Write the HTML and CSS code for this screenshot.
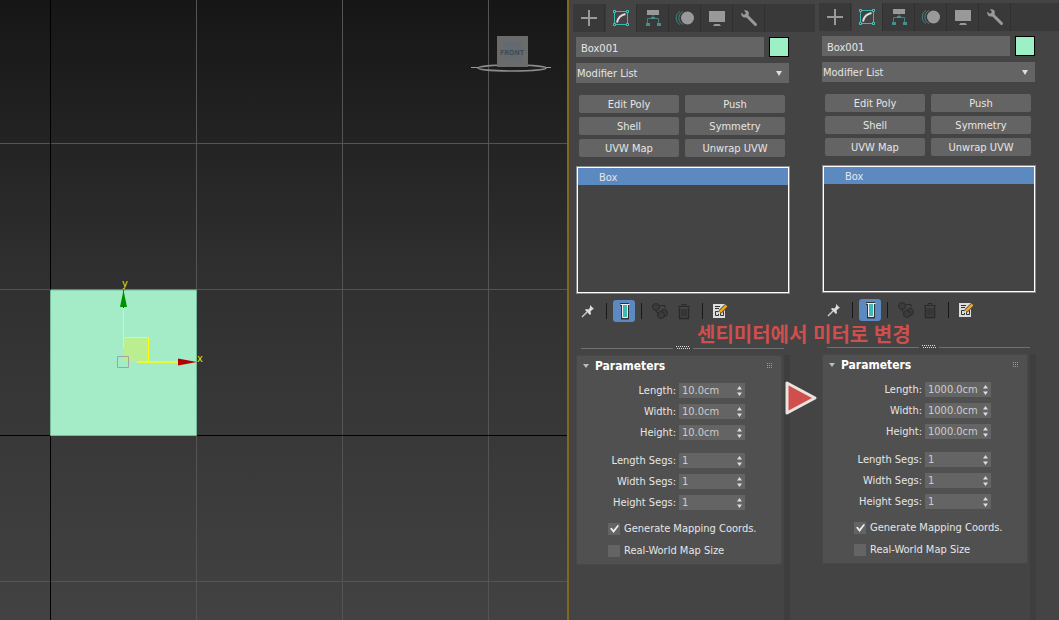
FILE: index.html
```
<!DOCTYPE html>
<html lang="ko">
<head>
  <meta charset="UTF-8">
  <meta name="viewport" content="width=device-width, initial-scale=1.0">
  <title>Box001</title>
  <link rel="stylesheet" href="styles.css">
</head>
<body>
  <!-- shared icons -->
  <svg class="defs" width="0" height="0">
    <symbol id="i-create" viewBox="0 0 20 20"><path d="M10 2v16M2 10h16" stroke="#999" stroke-width="2"/></symbol>
    <symbol id="i-modify" viewBox="0 0 20 20">
      <path d="M5 3.500h10M5 16.500h10M3.500 5v10M16.500 5v10" stroke="#3fb5b0"/>
      <path d="M2.500 2.500h2v2h-2zM15.500 2.500h2v2h-2zM2.500 15.500h2v2h-2zM15.500 15.500h2v2h-2z" fill="#333" stroke="#45c8c3"/>
      <path d="M6 14.500C7 9.500 9.500 7 14.500 6" fill="none" stroke="#ddd" stroke-width="2"/>
    </symbol>
    <symbol id="i-hierarchy" viewBox="0 0 20 20">
      <path d="M4 2h12v5H4z" fill="#999"/>
      <path d="M10 7v3M4.500 16v-5.500h11V16" fill="none" stroke="#43827f"/>
      <path d="M3 15h4v3H3zM14 15h4v3h-4zM8 9h4v2H8z" fill="#43918d"/>
    </symbol>
    <symbol id="i-motion" viewBox="0 0 20 20">
      <circle cx="12.500" cy="10" r="6.500" fill="#999"/>
      <path d="M5 3.500C0 6 0 14 5 16.500M8 3.500C2.500 6 2.500 14 8 16.500" fill="none" stroke="#43827f"/>
    </symbol>
    <symbol id="i-display" viewBox="0 0 20 20"><path d="M2 3h16v11H2zM6 18l1.500-2h5l1.500 2z" fill="#999"/></symbol>
    <symbol id="i-utils" viewBox="0 0 20 20">
      <path d="M8 8l8.500 8.500" stroke="#999" stroke-width="3" stroke-linecap="round"/>
      <path d="M5 2.500C9.500 1.500 10.500 5 9.500 7.500L7.500 9.500C4 10 1.500 8 2.500 4.500L5 7l2-2z" fill="#999"/>
    </symbol>
    <symbol id="i-pin" viewBox="0 0 16 16">
      <path d="M2 14l5-5" stroke="#ccc" stroke-width="1.500"/>
      <path d="M10 2l4 4-1.500.500-2 2 .500 2.500-1 1L5 7l1-1 2.500.500 1.500-2z" fill="#ddd"/>
    </symbol>
    <symbol id="i-tube" viewBox="0 0 18 18">
      <path d="M5 2.500h9M7.500 3v13h5V3" fill="none" stroke="#333" stroke-width="3"/>
      <path d="M5.500 2.500h9M7.500 3v12.500h5V3" fill="#3cbab6" stroke="#eee"/>
    </symbol>
    <symbol id="i-unique" viewBox="0 0 18 18">
      <circle cx="5" cy="5" r="3.500" fill="#3b3b3b" stroke="#2a2a2a"/>
      <path d="M9 3.500h5v3M5 9l2 3" fill="none" stroke="#2a2a2a"/>
      <circle cx="13" cy="11" r="3.500" fill="#3b3b3b" stroke="#2a2a2a"/>
      <circle cx="10" cy="13" r="3.500" fill="#3b3b3b" stroke="#2a2a2a"/>
    </symbol>
    <symbol id="i-trash" viewBox="0 0 18 18">
      <path d="M4.500 5.500v11h9v-11" fill="none" stroke="#292929" stroke-width="1.500"/>
      <path d="M3 4.500h12M7 4V2.500h4V4M7 7v7.500M9 7v7.500M11 7v7.500" fill="none" stroke="#292929"/>
    </symbol>
    <symbol id="i-config" viewBox="0 0 16 16">
      <path d="M0 1h12v14H0z" fill="#ddd"/>
      <path d="M2 3.500h5M2 5.500h4M2.500 8.500h3v4h-3zM7.500 8.500h3v4h-3z" fill="none" stroke="#333"/>
      <path d="M7 9l7-7" stroke="#444" stroke-width="4"/>
      <path d="M7 9l6.500-6.500" stroke="#f5a716" stroke-width="2.500"/>
      <path d="M5 11l.500-2.500 2 2z" fill="#eee"/>
    </symbol>
    <symbol id="i-spin" viewBox="0 0 7 10"><path d="M3.500 0L6 3.500H1zM3.500 10L1 6.500h5z" fill="#ddd"/></symbol>
    <symbol id="i-grip" viewBox="0 0 6 6"><path d="M0 .500h6M0 2.500h6M0 4.500h6" stroke="#999" stroke-dasharray="1 1"/></symbol>
    <symbol id="i-dots" viewBox="0 0 14 4"><path d="M0 .500h14M1 2.500h13" stroke="#ddd" stroke-dasharray="1 1"/></symbol>
  </svg>

  <div class="app">
    <main class="viewport">
      <svg class="scene" viewBox="0 0 567 620" preserveAspectRatio="xMinYMin slice">
        <path d="M196.500 0v620M342.500 0v620M488.500 0v620M0 143.500h567M0 289.500h567M0 581.500h567" stroke="#545454"/>
        <path d="M50.500 0v620M0 435.500h567" stroke="#000"/>
        <path d="M50.500 290h146v145.500h-146z" fill="#a3ecc7" stroke="#78b899"/>
        <!-- gizmo -->
        <path d="M124 338h25v24h-25z" fill="#bbed91"/>
        <path d="M123.500 308v40" stroke="#ff0"/>
        <path d="M123.500 308v-18" stroke="#070"/>
        <path d="M124 337.500h24.500V362" fill="none" stroke="#ff0"/>
        <path d="M137 362h42" stroke="#ff0" stroke-width="1.500"/>
        <path d="M123.500 290l3.500 17h-7z" fill="#009100"/>
        <path d="M197 362l-19-3.500v7z" fill="#b40000"/>
        <path d="M117.500 356.500h11v11h-11z" fill="none" stroke="#a2a2a2"/>
        <text class="axis" x="122" y="287">y</text>
        <text class="axis" x="197" y="362">x</text>
        <!-- view cube -->
        <ellipse cx="512" cy="68" rx="34" ry="3" fill="none" stroke="#8c8c8c" stroke-width="1.500"/>
        <path d="M471 67.500h7M546 67.500h5" stroke="#999"/>
        <path d="M497 36h31v31h-31z" fill="#6b6b6b"/>
        <path d="M503 42h19v19h-19z" fill="#646a70"/>
        <text class="cube" x="512" y="55">FRONT</text>
      </svg>
    </main>

    <section class="panel">
      <nav class="tabs">
        <button class="tab" aria-label="Create"><svg><use href="#i-create"/></svg></button>
        <button class="tab active" aria-label="Modify"><svg><use href="#i-modify"/></svg></button>
        <button class="tab" aria-label="Hierarchy"><svg><use href="#i-hierarchy"/></svg></button>
        <button class="tab" aria-label="Motion"><svg><use href="#i-motion"/></svg></button>
        <button class="tab" aria-label="Display"><svg><use href="#i-display"/></svg></button>
        <button class="tab" aria-label="Utilities"><svg><use href="#i-utils"/></svg></button>
      </nav>
      <div class="content">
        <div class="name-row">
          <input class="name" type="text" value="Box001" aria-label="Name">
          <button class="swatch" aria-label="Color"></button>
        </div>
        <div class="dropdown">
          <select aria-label="Modifier List"><option>Modifier List</option></select>
        </div>
        <div class="modifiers">
          <button>Edit Poly</button><button>Push</button>
          <button>Shell</button><button>Symmetry</button>
          <button>UVW Map</button><button>Unwrap UVW</button>
        </div>
        <ul class="stack"><li>Box</li></ul>
        <div class="tools">
          <button class="tool pin" aria-label="Pin"><svg><use href="#i-pin"/></svg></button>
          <span class="sep"></span>
          <button class="tool on" aria-label="Show end result"><svg><use href="#i-tube"/></svg></button>
          <span class="sep"></span>
          <button class="tool" aria-label="Make unique"><svg><use href="#i-unique"/></svg></button>
          <button class="tool" aria-label="Remove"><svg><use href="#i-trash"/></svg></button>
          <span class="sep"></span>
          <button class="tool config" aria-label="Configure"><svg><use href="#i-config"/></svg></button>
        </div>
        <div class="splitter"><svg><use href="#i-dots"/></svg></div>
        <div class="scroll">
          <div class="rollout">
            <h2>Parameters <svg><use href="#i-grip"/></svg></h2>
            <div class="fields">
              <label for="len1">Length:</label><span class="spinner"><input id="len1" type="text" value="10.0cm"><svg><use href="#i-spin"/></svg></span>
              <label for="wid1">Width:</label><span class="spinner"><input id="wid1" type="text" value="10.0cm"><svg><use href="#i-spin"/></svg></span>
              <label for="hei1">Height:</label><span class="spinner"><input id="hei1" type="text" value="10.0cm"><svg><use href="#i-spin"/></svg></span>
            </div>
            <div class="fields">
              <label for="ls1">Length Segs:</label><span class="spinner"><input id="ls1" type="text" value="1"><svg><use href="#i-spin"/></svg></span>
              <label for="ws1">Width Segs:</label><span class="spinner"><input id="ws1" type="text" value="1"><svg><use href="#i-spin"/></svg></span>
              <label for="hs1">Height Segs:</label><span class="spinner"><input id="hs1" type="text" value="1"><svg><use href="#i-spin"/></svg></span>
            </div>
            <div class="checks">
              <label><input type="checkbox" checked>Generate Mapping Coords.</label>
              <label><input type="checkbox">Real-World Map Size</label>
            </div>
          </div>
          <div class="track"></div>
        </div>
      </div>
    </section>

    <section class="panel after">
      <nav class="tabs">
        <button class="tab" aria-label="Create"><svg><use href="#i-create"/></svg></button>
        <button class="tab active" aria-label="Modify"><svg><use href="#i-modify"/></svg></button>
        <button class="tab" aria-label="Hierarchy"><svg><use href="#i-hierarchy"/></svg></button>
        <button class="tab" aria-label="Motion"><svg><use href="#i-motion"/></svg></button>
        <button class="tab" aria-label="Display"><svg><use href="#i-display"/></svg></button>
        <button class="tab" aria-label="Utilities"><svg><use href="#i-utils"/></svg></button>
      </nav>
      <div class="content">
        <div class="name-row">
          <input class="name" type="text" value="Box001" aria-label="Name">
          <button class="swatch" aria-label="Color"></button>
        </div>
        <div class="dropdown">
          <select aria-label="Modifier List"><option>Modifier List</option></select>
        </div>
        <div class="modifiers">
          <button>Edit Poly</button><button>Push</button>
          <button>Shell</button><button>Symmetry</button>
          <button>UVW Map</button><button>Unwrap UVW</button>
        </div>
        <ul class="stack"><li>Box</li></ul>
        <div class="tools">
          <button class="tool pin" aria-label="Pin"><svg><use href="#i-pin"/></svg></button>
          <span class="sep"></span>
          <button class="tool on" aria-label="Show end result"><svg><use href="#i-tube"/></svg></button>
          <span class="sep"></span>
          <button class="tool" aria-label="Make unique"><svg><use href="#i-unique"/></svg></button>
          <button class="tool" aria-label="Remove"><svg><use href="#i-trash"/></svg></button>
          <span class="sep"></span>
          <button class="tool config" aria-label="Configure"><svg><use href="#i-config"/></svg></button>
        </div>
        <div class="splitter"><svg><use href="#i-dots"/></svg></div>
        <div class="scroll">
          <div class="rollout">
            <h2>Parameters <svg><use href="#i-grip"/></svg></h2>
            <div class="fields">
              <label for="len2">Length:</label><span class="spinner"><input id="len2" type="text" value="1000.0cm"><svg><use href="#i-spin"/></svg></span>
              <label for="wid2">Width:</label><span class="spinner"><input id="wid2" type="text" value="1000.0cm"><svg><use href="#i-spin"/></svg></span>
              <label for="hei2">Height:</label><span class="spinner"><input id="hei2" type="text" value="1000.0cm"><svg><use href="#i-spin"/></svg></span>
            </div>
            <div class="fields">
              <label for="ls2">Length Segs:</label><span class="spinner"><input id="ls2" type="text" value="1"><svg><use href="#i-spin"/></svg></span>
              <label for="ws2">Width Segs:</label><span class="spinner"><input id="ws2" type="text" value="1"><svg><use href="#i-spin"/></svg></span>
              <label for="hs2">Height Segs:</label><span class="spinner"><input id="hs2" type="text" value="1"><svg><use href="#i-spin"/></svg></span>
            </div>
            <div class="checks">
              <label><input type="checkbox" checked>Generate Mapping Coords.</label>
              <label><input type="checkbox">Real-World Map Size</label>
            </div>
          </div>
          <div class="track"></div>
        </div>
      </div>
      <!-- notes over both panels -->
      <p class="note">센티미터에서 미터로 변경</p>
      <svg class="arrow" viewBox="0 0 34 36"><path d="M3 3v30l28-15z" fill="#d04e4c" stroke="#e8e4e0" stroke-width="3" stroke-linejoin="round"/></svg>
    </section>
  </div>
</body>
</html>
```
FILE: styles.css
```
* {
  box-sizing: border-box;
}
body {
  margin: 0;
  background: #444;
  color: #e6e6e6;
  font: 11px/16px "DejaVu Sans Condensed", "DejaVu Sans", sans-serif;
}
button, input, select {
  font: inherit;
  color: inherit;
  border: 0;
  padding: 0;
  margin: 0;
}
svg {
  display: block;
}
.defs {
  position: absolute;
}
.app {
  display: flex;
  min-height: 100vh;
  overflow: hidden;
}

/* viewport */
.viewport {
  flex: 1;
  min-width: 0;
  display: flex;
  background: linear-gradient(#161616, #303030 45%, #424242);
  border-right: 2px solid #80691f;
}
.scene {
  width: 100%;
  height: 100vh;
}
.axis {
  font-size: 11px;
  fill: #e0e000;
}
.cube {
  font-size: 7px;
  font-weight: bold;
  text-anchor: middle;
  fill: #434d58;
}

/* command panel */
.panel {
  position: relative;
  display: flex;
  flex-direction: column;
  width: 246px;
  flex: none;
  padding: 4px 0 0 4px;
}
.after {
  width: 244px;
  padding-top: 3px;
}
.tabs {
  display: flex;
  height: 28px;
  background: #393939;
}
.tab {
  display: flex;
  align-items: center;
  justify-content: center;
  width: 32px;
  background: #393939;
  border-right: 1px solid #303030;
}
.tab.active {
  background: #444;
  border-left: 1px solid #393939;
}
.tab svg {
  width: 20px;
  height: 20px;
}
.content {
  display: flex;
  flex-direction: column;
  flex: 1;
  width: 214px;
  margin: 5px 0 0 3px;
}
.name-row {
  display: flex;
  gap: 5px;
  padding-right: 1px;
}
.name {
  flex: 1;
  min-width: 0;
  height: 20px;
  padding: 2px 5px 0;
  background: #646464;
}
.swatch {
  width: 20px;
  height: 20px;
  background: #9defc6;
  border: 1px solid #000;
}
.dropdown {
  position: relative;
  margin: 6px 1px 0 0;
}
.dropdown select {
  display: block;
  appearance: none;
  width: 100%;
  height: 20px;
  padding: 1px 1px 0;
  background: #646464;
  border-radius: 0;
}
.dropdown::after {
  content: "";
  position: absolute;
  right: 7px;
  top: 8px;
  border: 3px solid transparent;
  border-top: 5px solid #ddd;
  border-bottom: 0;
}
.modifiers {
  display: grid;
  grid-template-columns: 1fr 1fr;
  gap: 4px 6px;
  padding: 0 5px 0 3px;
  margin-top: 12px;
}
.modifiers button {
  height: 18px;
  padding-top: 1px;
  line-height: 17px;
  background: #646464;
  border-radius: 2px;
}
.stack {
  list-style: none;
  height: 126px;
  margin: 10px 1px 1px;
  padding: 0;
  border: 1px solid #fff;
  box-shadow: 0 0 0 1px #8a8a8a;
}
.stack li {
  height: 17px;
  padding-left: 21px;
  line-height: 19px;
  background: #5d89c1;
}

/* stack tools */
.tools {
  display: flex;
  align-items: center;
  margin-top: 6px;
}
.tool {
  display: flex;
  align-items: center;
  justify-content: center;
  width: 24px;
  height: 22px;
  background: none;
}
.tool svg {
  width: 18px;
  height: 18px;
}
.pin svg, .config svg {
  width: 16px;
  height: 16px;
}
.tool.on {
  width: 22px;
  border-radius: 3px;
  background: #5d89c1;
}
.sep {
  width: 1px;
  height: 16px;
  margin: 0 6px;
  background: #181818;
}
.splitter {
  display: flex;
  align-items: center;
  gap: 3px;
  height: 4px;
  margin: 24px 6px 0 5px;
}
.splitter::before, .splitter::after {
  content: "";
  flex: 1;
  height: 1px;
  background: #707070;
}
.splitter svg {
  width: 14px;
  height: 4px;
}

/* parameters */
.scroll {
  display: flex;
  flex: 1;
  align-items: flex-start;
  justify-content: space-between;
  margin-top: 5px;
}
.track {
  align-self: stretch;
  width: 6px;
  background: #3e3e3e;
}
.rollout {
  width: 206px;
  padding-bottom: 5px;
  background: #505050;
  border: 1px solid #484848;
  border-radius: 2px;
}
.rollout h2 {
  display: flex;
  align-items: center;
  height: 20px;
  margin: 0;
  padding: 0 8px 0 6px;
  font-size: 12px;
  color: #fff;
}
.rollout h2::before {
  content: "";
  margin-right: 6px;
  border: 3px solid transparent;
  border-top: 4px solid #bbb;
  border-bottom: 0;
}
.rollout h2 svg {
  width: 6px;
  height: 6px;
  margin-left: auto;
}
.fields {
  display: grid;
  grid-template-columns: 99px 66px;
  gap: 6px 3px;
  margin-top: 7px;
}
.fields + .fields {
  margin-top: 13px;
}
.fields label {
  height: 15px;
  line-height: 15px;
  text-align: right;
  white-space: nowrap;
}
.spinner {
  display: flex;
  align-items: center;
  height: 15px;
  padding-right: 2px;
  background: #646464;
}
.spinner input {
  flex: 1;
  min-width: 0;
  height: 15px;
  padding: 1px 0 0 3px;
  background: none;
  color: #ccc;
}
.spinner svg {
  width: 7px;
  height: 10px;
}
.checks {
  display: flex;
  flex-direction: column;
  gap: 6px;
  margin: 11px 0 0 31px;
}
.checks label {
  display: flex;
  align-items: center;
  gap: 4px;
  white-space: nowrap;
}
.checks input {
  position: relative;
  appearance: none;
  width: 12px;
  height: 12px;
  background: #646464;
}
.checks input:checked::after {
  content: "";
  position: absolute;
  left: 2px;
  top: 2px;
  width: 9px;
  height: 8px;
  background: #eee;
  clip-path: polygon(0 45%, 20% 35%, 38% 62%, 85% 0, 100% 8%, 40% 100%);
}

/* notes */
.note {
  position: absolute;
  left: -118px;
  top: 320px;
  margin: 0;
  font: bold 20px/28px "Noto Sans CJK KR", sans-serif;
  color: #d04e4c;
  white-space: nowrap;
}
.arrow {
  position: absolute;
  left: -31px;
  top: 380px;
  width: 34px;
  height: 36px;
}
```
